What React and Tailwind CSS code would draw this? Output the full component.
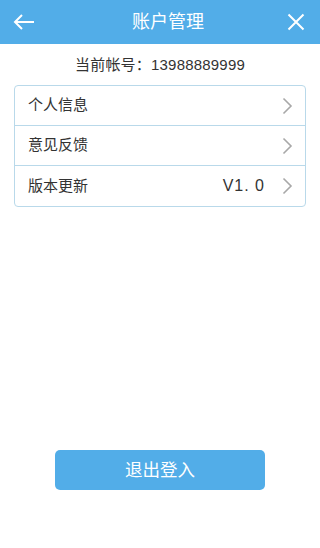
import { useState } from 'react'

function Chevron() {
  return (
    <svg width="11" height="18" viewBox="0 0 11 18" fill="none" className="shrink-0">
      <path d="M1.5 1.5 L9 9 L1.5 16.5" stroke="#a8a8a8" strokeWidth="1.6" />
    </svg>
  )
}

function Row({ label, value, last }) {
  return (
    <div className={`flex items-center h-10 pl-[13px] pr-[12px] ${last ? '' : 'border-b border-[#b9d9ea]'}`}>
      <span className="flex-1 text-[15px] text-[#333]">{label}</span>
      {value && <span className="text-[16px] text-[#333] mr-[17px] tracking-[1px]">{value}</span>}
      <Chevron />
    </div>
  )
}

export default function App() {
  const [items] = useState([
    { label: '个人信息' },
    { label: '意见反馈' },
    { label: '版本更新', value: 'V1. 0' },
  ])

  return (
    <div
      className="w-[320px] h-[548px] bg-white flex flex-col"
      style={{ fontFamily: '"Liberation Sans", "Noto Sans CJK SC", sans-serif' }}
    >
      <div className="h-11 bg-[#52ade8] flex items-center justify-between px-[13px] text-white">
        <svg width="22" height="16" viewBox="0 0 22 16" fill="none">
          <path d="M21 8 H2 M9 1 L2 8 L9 15" stroke="white" strokeWidth="2" />
        </svg>
        <span className="text-[18px] ml-[14px]">账户管理</span>
        <svg width="18" height="18" viewBox="0 0 18 18" fill="none" className="mr-[2px]">
          <path d="M1.5 1.5 L16.5 16.5 M16.5 1.5 L1.5 16.5" stroke="white" strokeWidth="2" />
        </svg>
      </div>

      <div className="text-center text-[15px] text-[#333] mt-[10px] leading-[22px] tracking-[0.2px]">当前帐号：13988889999</div>

      <div className="mx-[14px] mt-[9px] border border-[#b9d9ea] rounded-[4px]">
        {items.map((it, i) => (
          <Row key={it.label} label={it.label} value={it.value} last={i === items.length - 1} />
        ))}
      </div>

      <div className="flex-1" />

      <div className="flex justify-center mb-[58px]">
        <button className="w-[210px] h-10 bg-[#52ade8] rounded-[5px] text-white text-[17.5px]">
          退出登入
        </button>
      </div>
    </div>
  )
}
